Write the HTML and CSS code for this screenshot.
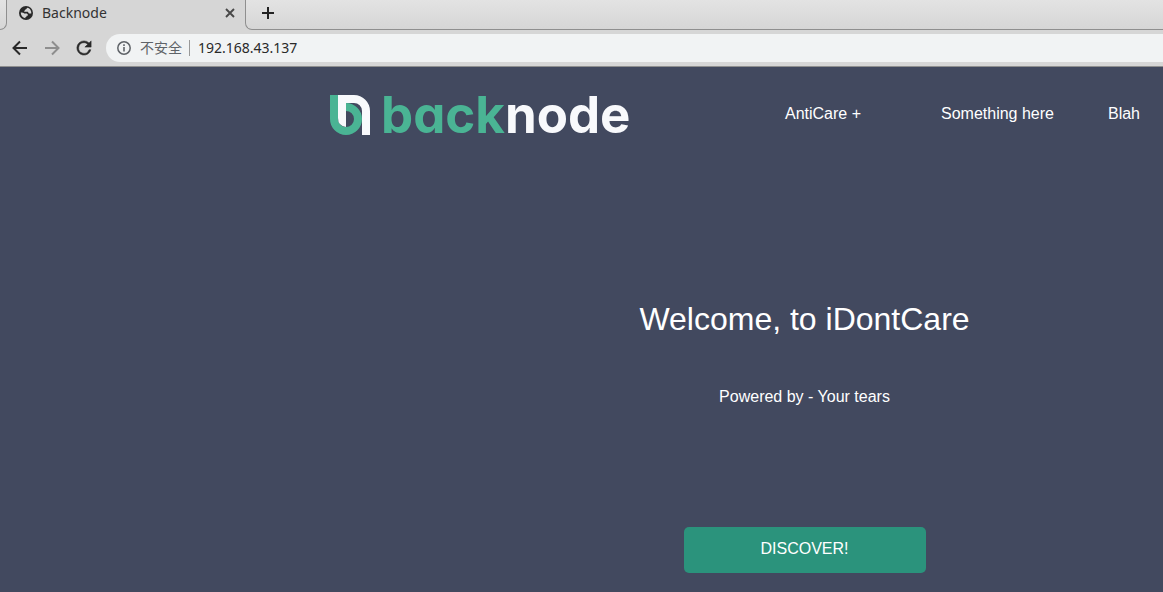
FILE: index.html
```html
<!DOCTYPE html>
<html lang="en">
<head>
<meta charset="utf-8">
<title>Backnode</title>
<link rel="stylesheet" href="styles.css">
</head>
<body>
<div class="browser">
  <div class="tabs">
    <div class="tab-edge"></div>
    <div class="tab">
      <svg class="globe" viewBox="0 0 24 24" aria-hidden="true"><circle cx="12" cy="12" r="12" fill="#292929"/><path d="M14 3c-1 1-.6 2-2 2.500-2 .5-1 2.500-3 2.500v2h6c1 0 1 3 2.500 3H21c.5-3-1-7-4-9zM3 11c0 5 3 9 8 10v-2c2 0 2-1.500 2-2.500h2v-2.500c-1 0-1-1-2.500-1H9c-1-2-3-2-6-2z" fill="#d6d6d6"/></svg>
      <span class="tab-title">Backnode</span>
      <button class="icon-button" aria-label="Close tab"><svg width="10" height="10" viewBox="0 0 10 10"><path d="M1 1l8 8M9 1l-8 8" stroke="#484848" stroke-width="1.900"/></svg></button>
    </div>
    <div class="strip-rest">
      <button class="icon-button" aria-label="New tab"><svg width="12" height="12" viewBox="0 0 12 12"><path d="M6 0v12M0 6h12" stroke="#222" stroke-width="2"/></svg></button>
    </div>
  </div>
  <div class="toolbar">
    <button class="icon-button" aria-label="Back"><svg width="16" height="16" viewBox="0 0 16 16"><path d="M15 8H2M8 1.500L1.500 8L8 14.500" fill="none" stroke="#292929" stroke-width="2"/></svg></button>
    <button class="icon-button" aria-label="Forward"><svg width="16" height="16" viewBox="0 0 16 16"><path d="M1 8h13M8 1.500L14.500 8L8 14.500" fill="none" stroke="#8e8e8e" stroke-width="2"/></svg></button>
    <button class="icon-button" aria-label="Reload"><svg width="16" height="16" viewBox="3 3 18 18"><path d="M17.650 6.350A7.960 7.960 0 0 0 12 4a8 8 0 1 0 7.730 10h-2.080A6 6 0 1 1 12 6c1.660 0 3.140.69 4.220 1.780L13 11h7V4z" fill="#292929" stroke="#292929" stroke-width=".6"/></svg></button>
    <div class="omnibox">
      <svg width="14" height="14" viewBox="0 0 14 14" aria-hidden="true"><circle cx="7" cy="7" r="6.200" fill="none" stroke="#5f6368" stroke-width="1.500"/><path d="M7 6v4.500M7 3.300v1.700" stroke="#5f6368" stroke-width="1.600"/></svg>
      <span class="security" lang="zh-CN">不安全</span>
      <input class="address" type="text" value="192.168.43.137" aria-label="Address">
    </div>
  </div>
</div>
<div class="page">
  <header class="header">
    <a class="logo" href="#">
      <svg class="mark" width="40" height="40" viewBox="0 0 40 40" aria-hidden="true"><path d="M0 0h8v24a8 8 0 0 0 16 0a8 8 0 0 0-8-8V8a16 16 0 1 1-16 16z" fill="#4ab494"/><path d="M8 0h16a16 16 0 0 1 16 16v24h-8V16a8 8 0 0 0-8-8h-8v24q-8-1-8-9z" fill="#f8f9fc"/></svg>
      <span class="wordmark"><span class="green">back</span>node</span>
    </a>
    <nav class="nav">
      <a class="menu" href="#">AntiCare +</a>
      <a href="#">Something here</a>
      <a href="#">Blah</a>
    </nav>
  </header>
  <main class="hero">
    <h1>Welcome, to iDontCare</h1>
    <p>Powered by - Your tears</p>
    <button class="discover">DISCOVER!</button>
  </main>
</div>
</body>
</html>
```

FILE: styles.css
```css
* { box-sizing: border-box; }
body {
  margin: 0;
  min-height: 100vh;
  display: flex;
  flex-direction: column;
  background: #42495f;
  font: 16px/20px "Liberation Sans", Arial, sans-serif;
  overflow: hidden;
}
.browser {
  background: #d6d6d6;
  border-bottom: 1px solid #8f8f8f;
  font-family: "Noto Sans", "Noto Sans CJK SC", sans-serif;
  font-size: 14px;
}
.icon-button {
  display: flex;
  padding: 0;
  border: 0;
  background: none;
}
.tabs { display: flex; height: 30px; }
.tab-edge {
  width: 7px;
  border: solid #8f8f8f;
  border-width: 0 1px 1px 0;
  border-bottom-right-radius: 7px;
  background: linear-gradient(#e3e3e3, #d6d6d6);
}
.tab {
  display: flex;
  align-items: center;
  width: 238px;
  padding: 0 10px 4px 12px;
}
.globe { width: 14px; height: 14px; margin-right: 9px; }
.tab-title { flex: 1; color: #333; }
.strip-rest {
  display: flex;
  align-items: center;
  flex: 1;
  padding: 0 16px 3px;
  border: solid #8f8f8f;
  border-width: 0 0 1px 1px;
  border-bottom-left-radius: 7px;
  background: linear-gradient(#e3e3e3, #d6d6d6);
}
.toolbar {
  display: flex;
  align-items: center;
  gap: 16px;
  height: 36px;
  padding-left: 12px;
}
.omnibox {
  display: flex;
  align-items: center;
  flex: 1;
  height: 28px;
  margin-left: -2px;
  padding-left: 11px;
  border-radius: 14px 0 0 14px;
  background: #f1f3f4;
}
.security {
  margin: 0 7px 0 9px;
  color: #5f6368;
}
.address {
  flex: 1;
  height: 16px;
  padding: 0 0 0 8px;
  border: 0;
  border-left: 1px solid #999;
  background: none;
  color: #292929;
  font: inherit;
}
.page { flex: 1; color: #fff; }
.header {
  display: flex;
  align-items: center;
  padding: 28px 0 0 330px;
}
.logo {
  display: flex;
  gap: 11px;
  height: 40px;
  text-decoration: none;
}
.wordmark {
  color: #f8f9fc;
  font: 700 51px/40px Inter, sans-serif;
  font-feature-settings: "cv11";
}
.green { color: #4ab494; }
.nav {
  display: flex;
  flex: 1;
  justify-content: flex-end;
  gap: 54px;
  padding: 0 23px 3px 0;
}
.nav a {
  color: #fff;
  text-decoration: none;
  white-space: nowrap;
}
.nav .menu { margin-right: 26px; }
.hero {
  display: flex;
  flex-direction: column;
  align-items: center;
  padding: 164px 0 19px 446px;
}
h1 {
  margin: 0;
  font-size: 32px;
  font-weight: 400;
  line-height: 40px;
}
p { margin: 48px 0 120px; }
.discover {
  width: 242px;
  height: 46px;
  padding: 0 0 2px;
  border: 0;
  border-radius: 5px;
  background: #2b937c;
  color: #fff;
  font: inherit;
}
```
